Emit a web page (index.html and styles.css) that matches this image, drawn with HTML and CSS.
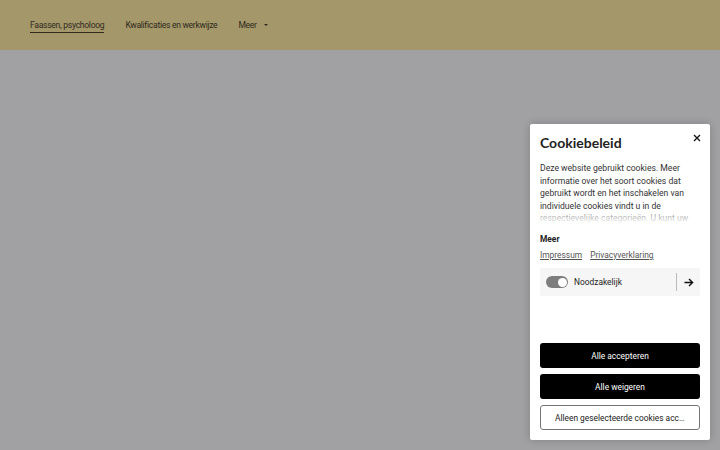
FILE: index.html
```html
<!DOCTYPE html>
<html lang="nl">
<head>
  <meta charset="UTF-8">
  <title>Faassen, psycholoog</title>
  <link rel="stylesheet" href="styles.css">
</head>
<body>
  <header class="topbar">
    <nav class="nav">
      <a class="nav-link active" href="#">Faassen, psycholoog</a>
      <a class="nav-link" href="#">Kwalificaties en werkwijze</a>
      <a class="nav-link more" href="#">Meer <span class="caret"></span></a>
    </nav>
  </header>
  <main class="page"></main>

  <aside class="cookie-panel">
    <div class="cookie-head">
      <h2 class="cookie-title">Cookiebeleid</h2>
      <button class="close-btn" aria-label="Sluiten">
        <svg width="8" height="8" viewBox="0 0 8 8"><path d="M1 1L7 7M7 1L1 7" stroke="#111" stroke-width="1.3" fill="none"/></svg>
      </button>
    </div>
    <div class="cookie-text">
      <p>Deze website gebruikt cookies. Meer informatie over het soort cookies dat gebruikt wordt en het inschakelen van individuele cookies vindt u in de respectievelijke categorieën. U kunt uw toestemming op elk moment intrekken.</p>
      <div class="fade"></div>
    </div>
    <h3 class="more-title">Meer</h3>
    <div class="links">
      <a href="#">Impressum</a>
      <a href="#">Privacyverklaring</a>
    </div>
    <div class="category">
      <span class="toggle"><span class="knob"></span></span>
      <span class="cat-label">Noodzakelijk</span>
      <span class="cat-arrow">
        <svg width="10" height="9" viewBox="0 0 10 9"><path d="M0.5 4.5H8.5M5 1L8.6 4.5L5 8" stroke="#111" stroke-width="1.4" fill="none"/></svg>
      </span>
    </div>
    <div class="actions">
      <button class="btn btn-dark">Alle accepteren</button>
      <button class="btn btn-dark">Alle weigeren</button>
      <button class="btn btn-light">Alleen geselecteerde cookies accepteren</button>
    </div>
  </aside>
</body>
</html>
```

FILE: styles.css
```css
html, body {
  margin: 0;
  height: 100%;
}
body {
  font-family: Roboto, "Liberation Sans", sans-serif;
  background: #a1a1a3;
  overflow: hidden;
}
.topbar {
  height: 50px;
  background: #a4976a;
  display: flex;
  align-items: center;
  padding-left: 30px;
}
.nav {
  display: flex;
  gap: 21px;
  align-items: center;
}
.nav-link {
  color: #2f2a1c;
  font-size: 8.6px;
  letter-spacing: -0.3px;
  text-decoration: none;
  padding: 3px 0 2px;
  border-bottom: 1px solid transparent;
}
.nav-link.active {
  border-bottom-color: #2f2a1c;
}
.nav-link.more {
  display: flex;
  align-items: center;
  gap: 4px;
}
.caret {
  display: inline-block;
  width: 0;
  height: 0;
  margin-left: 3px;
  border-left: 2.5px solid transparent;
  border-right: 2.5px solid transparent;
  border-top: 2.5px solid #2f2a1c;
}
.page {
  height: 400px;
}
.cookie-panel {
  position: absolute;
  top: 124px;
  left: 530px;
  width: 180px;
  height: 316px;
  box-sizing: border-box;
  padding: 10px;
  background: #fff;
  border-radius: 2px;
  box-shadow: 0 0 8px rgba(0, 0, 0, 0.2);
  display: flex;
  flex-direction: column;
}
.cookie-head {
  display: flex;
  justify-content: space-between;
  align-items: flex-start;
}
.cookie-title {
  margin: 0;
  font-family: Lato, "Open Sans", sans-serif;
  font-weight: 700;
  font-size: 14px;
  color: #222;
  line-height: 17px;
}
.close-btn {
  border: none;
  background: none;
  padding: 0;
  margin: 0 -1px 0 0;
  line-height: 0;
  cursor: pointer;
}
.cookie-text {
  position: relative;
  height: 62px;
  margin-top: 11px;
  overflow: hidden;
}
.cookie-text p {
  margin: 0;
  font-size: 8.6px;
  line-height: 12.6px;
  color: #333;
}
.fade {
  position: absolute;
  left: 0;
  right: 0;
  bottom: 0;
  height: 14px;
  background: linear-gradient(rgba(255, 255, 255, 0.3), #fff);
}
.more-title {
  margin: 10px 0 0;
  font-size: 8.4px;
  font-weight: 700;
  color: #222;
}
.links {
  display: flex;
  gap: 8px;
  margin-top: 6px;
}
.links a {
  font-size: 8.4px;
  color: #555;
  text-decoration: underline;
}
.category {
  margin-top: 8px;
  height: 28px;
  background: #f6f6f6;
  display: flex;
  align-items: center;
  padding: 0 6px;
}
.toggle {
  width: 22px;
  height: 12px;
  border-radius: 6px;
  background: #7d7d7d;
  display: flex;
  justify-content: flex-end;
  align-items: center;
  padding: 0 1.5px;
  box-sizing: border-box;
}
.knob {
  width: 9px;
  height: 9px;
  border-radius: 50%;
  background: #fff;
}
.cat-label {
  margin-left: 6px;
  font-size: 8.4px;
  color: #222;
  flex: 1;
}
.cat-arrow {
  border-left: 1px solid #bbb;
  height: 18px;
  padding-left: 7px;
  display: flex;
  align-items: center;
}
.actions {
  margin-top: auto;
  display: flex;
  flex-direction: column;
  gap: 6px;
}
.btn {
  height: 25px;
  border-radius: 3px;
  font-family: Roboto, "Liberation Sans", sans-serif;
  font-size: 8.4px;
  cursor: pointer;
  padding: 0 14px;
  white-space: nowrap;
  overflow: hidden;
  text-overflow: ellipsis;
}
.btn-dark {
  background: #000;
  color: #fff;
  border: none;
}
.btn-light {
  background: #fff;
  color: #222;
  border: 1px solid #777;
}
```
